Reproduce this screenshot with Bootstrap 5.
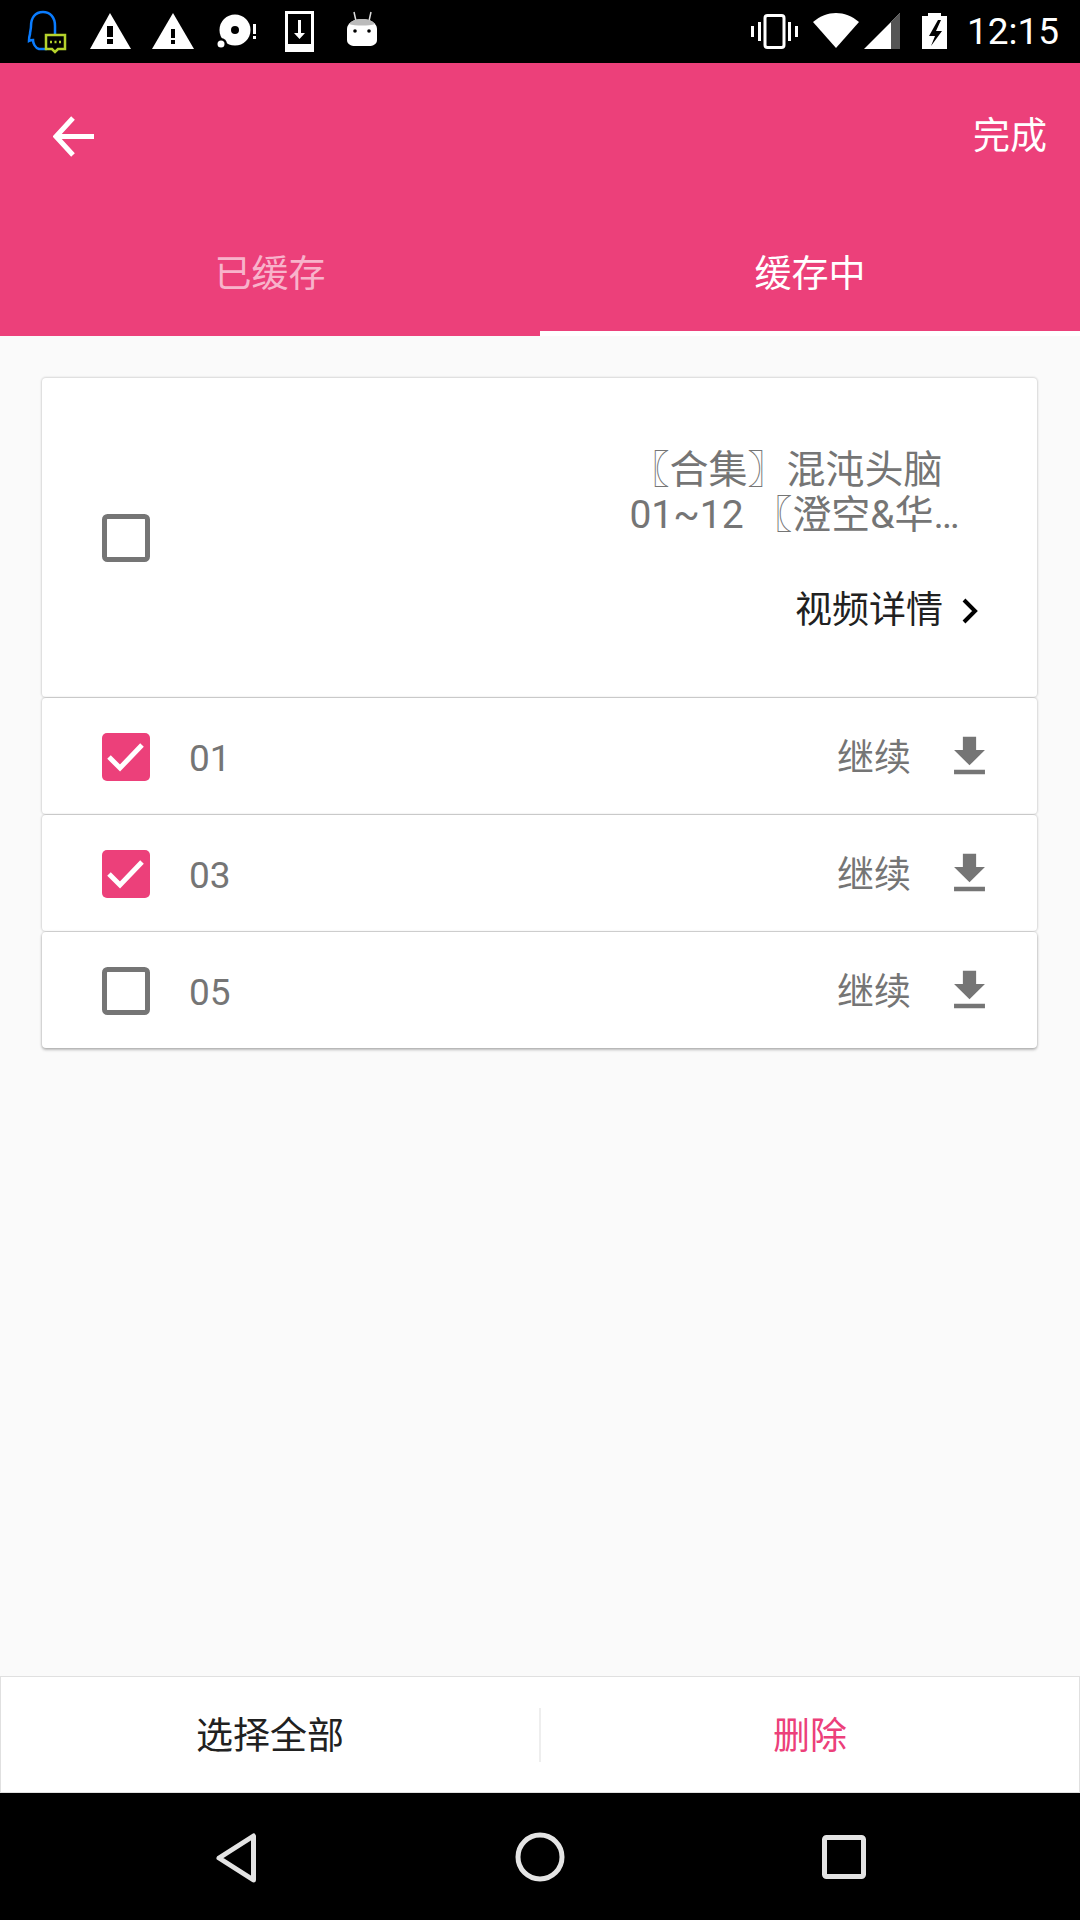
<!DOCTYPE html>
<html lang="zh">
<head>
    <meta charset="UTF-8">
    <meta name="viewport" content="width=device-width, initial-scale=1.0">
    <title>缓存中</title>
    <link href="https://cdn.jsdelivr.net/npm/bootstrap@5.3.0/dist/css/bootstrap.min.css" rel="stylesheet">
    <style>
        html, body { margin: 0; }
        body {
            width: 1080px; height: 1920px; overflow: hidden;
            background: #fafafa;
            font-family: Roboto, "Noto Sans CJK SC", sans-serif;
            font-size: 37px; line-height: 45px; color: #757575;
        }
        .shell { height: 1920px; }
        .status-strip { height: 63px; background: #000; color: #fff; }
        .status-time { width: 113px; line-height: 63px; }
        .pink-head { height: 273px; background: #ec407a; color: #fff; }
        .head-bar { height: 146px; padding: 0 33px 0 53px; }
        .head-done { padding-top: 1px; }
        .tab-cell { height: 127px; padding-top: 3px; }
        .tab-idle { color: #f8b3cb; }
        .tab-on { box-shadow: inset 0 -5px 0 #fff; }
        .job-list { padding: 42px 43px 0 42px; }
        .job-card {
            background: #fff; border: 0; border-radius: 4px; margin-bottom: 1px;
            box-shadow: 0 0 2px 1px rgba(0, 0, 0, .14);
        }
        .job-card:last-child { box-shadow: 0 2px 3px 0 rgba(0, 0, 0, .24), 0 0 2px 1px rgba(0, 0, 0, .1); }
        .job-top { height: 319px; padding: 70px 70px 0 60px; }
        .job-row { height: 116px; padding: 1px 41px 0 60px; }
        .tick-box { width: 48px; height: 48px; flex: none; }
        .job-top .tick-box { margin-top: 66px; }
        .job-title { width: 345px; text-align: center; font-size: 39px; }
        .job-title-top { padding-right: 16px; }
        .job-more { margin-top: 50px; margin-right: -12px; color: #212121; gap: 18px; }
        .job-num { margin-left: 39px; padding-top: 4px; }
        .job-act { margin-right: 32px; padding-top: 4px; }
        .foot-bar {
            height: 117px; background: #fff; border: 1px solid #e0e0e0; color: #212121;
        }
        .foot-label { padding-top: 3px; }
        .foot-split { width: 2px; height: 54px; background: #eee; flex: none; }
        .foot-del { color: #ec407a; }
        .nav-strip { height: 127px; background: #000; }
    </style>
</head>
<body>
    <div class="shell d-flex flex-column">
        <!-- status bar -->
        <div class="status-strip d-flex justify-content-between align-items-center">
            <svg width="400" height="63" viewBox="0 0 400 63">
                <path d="M43 12c-8 0-12 6-12 14 0 4-1 5-1 8-1 3-1 6-1 7 2-1 3-1 4-1 0 3 2 8 6 9h8" fill="none" stroke="#0a7cff" stroke-width="2.5"/>
                <path d="M43 12c7 0 12 5 12 14v8" fill="none" stroke="#0a7cff" stroke-width="2.5"/>
                <path d="M46 35h19v14h-7l-3 3-3-3h-6z" fill="#000" stroke="#b5d22c" stroke-width="2.5"/>
                <path d="M50 42h2M54.500 42h2M59 42h2" stroke="#b5d22c" stroke-width="2.500"/>
                <path d="M110 13l21 36h-41z" fill="#fff"/>
                <path d="M107 26h6v11h-6zM107 39h6v5h-6z" fill="#000"/>
                <path d="M173 13l21 36h-42z" fill="#fff"/>
                <path d="M171 29h4v9h-4zM171 40h4v4h-4z" fill="#000"/>
                <circle cx="235" cy="30" r="15.500" fill="#fff"/>
                <circle cx="235" cy="30" r="4" fill="#000"/>
                <circle cx="221" cy="44" r="6" fill="#000"/>
                <circle cx="221" cy="44" r="3.500" fill="#fff"/>
                <path d="M253 24h3v10h-3zM253 36h3v3h-3z" fill="#fff"/>
                <path d="M285 11h29v41h-29z" fill="#fff"/>
                <path d="M288 14h23v30h-23z" fill="#000"/>
                <path d="M298 20h3v13h4l-5.500 6-5.500-6h4z" fill="#fff"/>
                <path d="M354 12l2 9M371 12l-2 9" stroke="#ddd" stroke-width="1.500"/>
                <path d="M347 29c0-6 7-10 15-10s15 4 15 10v11c0 4-4 6-8 6h-14c-4 0-8-2-8-6z" fill="#fff"/>
                <path d="M349 24c3-4 8-5 13-5s10 1 13 5c-6 2-20 2-26 0z" fill="#bbb"/>
                <circle cx="355" cy="31" r="1.800" fill="#000"/>
                <circle cx="369" cy="31" r="1.800" fill="#000"/>
            </svg>
            <div class="d-flex align-items-center">
                <svg width="216" height="63" viewBox="0 0 216 63">
                    <path d="M0 26h3v11h-3zM7 22h3v19h-3zM44 26h3v11h-3zM37 22h3v19h-3z" fill="#fff"/>
                    <rect x="14" y="15.500" width="19" height="32" rx="2.500" fill="none" stroke="#fff" stroke-width="3"/>
                    <path d="M62 22c14-12 32-12 46 0l-23 26z" fill="#fff"/>
                    <path d="M113 49l36-36v36z" fill="#fff"/>
                    <path d="M140 22l9-9v36h-9z" fill="#555"/>
                    <path d="M171 16h6v-3h13v3h6v33h-25z" fill="#fff"/>
                    <path d="M187 20l-9 16h6l-4 10 11-15h-6l5-11z" fill="#000"/>
                </svg>
                <div class="status-time">12:15</div>
            </div>
        </div>

        <!-- toolbar + tabs -->
        <div class="pink-head">
            <div class="head-bar d-flex justify-content-between align-items-center">
                <svg width="41" height="41" viewBox="0 0 41 41">
                    <path d="M20 2L3 20.500 20 39M3 20.500h38" fill="none" stroke="#fff" stroke-width="5"/>
                </svg>
                <span class="head-done">完成</span>
            </div>
            <div class="row g-0">
                <div class="col-6 tab-cell tab-idle d-flex align-items-center justify-content-center">已缓存</div>
                <div class="col-6 tab-cell tab-on d-flex align-items-center justify-content-center">缓存中</div>
            </div>
        </div>

        <!-- download list -->
        <div class="job-list flex-grow-1">
            <div class="card job-card job-top flex-row justify-content-between">
                <svg class="tick-box" viewBox="0 0 48 48">
                    <rect x="2.500" y="2.500" width="43" height="43" rx="3" fill="none" stroke="#757575" stroke-width="5"/>
                </svg>
                <div class="d-flex flex-column align-items-end">
                    <div class="job-title">
                        <div class="job-title-top">〖合集〗混沌头脑</div>
                        <div>01~12 〖澄空&amp;华…</div>
                    </div>
                    <div class="job-more d-flex align-items-center">
                        <span>视频详情</span>
                        <svg width="18" height="26" viewBox="0 0 18 26">
                            <path d="M3 2l11 11L3 24" fill="none" stroke="#000" stroke-width="4"/>
                        </svg>
                    </div>
                </div>
            </div>

            <div class="card job-card job-row flex-row align-items-center">
                <svg class="tick-box" viewBox="0 0 48 48">
                    <rect width="48" height="48" rx="5" fill="#ec407a"/>
                    <path d="M7 24l11 11 22-23" fill="none" stroke="#fff" stroke-width="5"/>
                </svg>
                <span class="job-num">01</span>
                <span class="job-act ms-auto">继续</span>
                <svg width="53" height="53" viewBox="0 0 24 24"><path d="M19 9h-4V3H9v6H5l7 7 7-7zM5 18v2h14v-2H5z" fill="#757575"/></svg>
            </div>

            <div class="card job-card job-row flex-row align-items-center">
                <svg class="tick-box" viewBox="0 0 48 48">
                    <rect width="48" height="48" rx="5" fill="#ec407a"/>
                    <path d="M7 24l11 11 22-23" fill="none" stroke="#fff" stroke-width="5"/>
                </svg>
                <span class="job-num">03</span>
                <span class="job-act ms-auto">继续</span>
                <svg width="53" height="53" viewBox="0 0 24 24"><path d="M19 9h-4V3H9v6H5l7 7 7-7zM5 18v2h14v-2H5z" fill="#757575"/></svg>
            </div>

            <div class="card job-card job-row flex-row align-items-center">
                <svg class="tick-box" viewBox="0 0 48 48">
                    <rect x="2.500" y="2.500" width="43" height="43" rx="3" fill="none" stroke="#757575" stroke-width="5"/>
                </svg>
                <span class="job-num">05</span>
                <span class="job-act ms-auto">继续</span>
                <svg width="53" height="53" viewBox="0 0 24 24"><path d="M19 9h-4V3H9v6H5l7 7 7-7zM5 18v2h14v-2H5z" fill="#757575"/></svg>
            </div>
        </div>

        <!-- bottom actions -->
        <div class="foot-bar d-flex align-items-center">
            <div class="flex-fill w-50 text-center foot-label">选择全部</div>
            <div class="foot-split"></div>
            <div class="flex-fill w-50 text-center foot-label foot-del">删除</div>
        </div>

        <!-- system nav -->
        <div class="nav-strip">
            <svg width="1080" height="127" viewBox="0 0 1080 127">
                <path d="M253.500 43v44L219 65z" fill="none" stroke="#e4e4e4" stroke-width="5" stroke-linejoin="round"/>
                <circle cx="540" cy="64" r="22" fill="none" stroke="#e4e4e4" stroke-width="5"/>
                <rect x="824.500" y="44.500" width="39" height="39" rx="2" fill="none" stroke="#e4e4e4" stroke-width="5"/>
            </svg>
        </div>
    </div>

    <script src="https://cdn.jsdelivr.net/npm/bootstrap@5.3.0/dist/js/bootstrap.bundle.min.js"></script>
</body>
</html>
